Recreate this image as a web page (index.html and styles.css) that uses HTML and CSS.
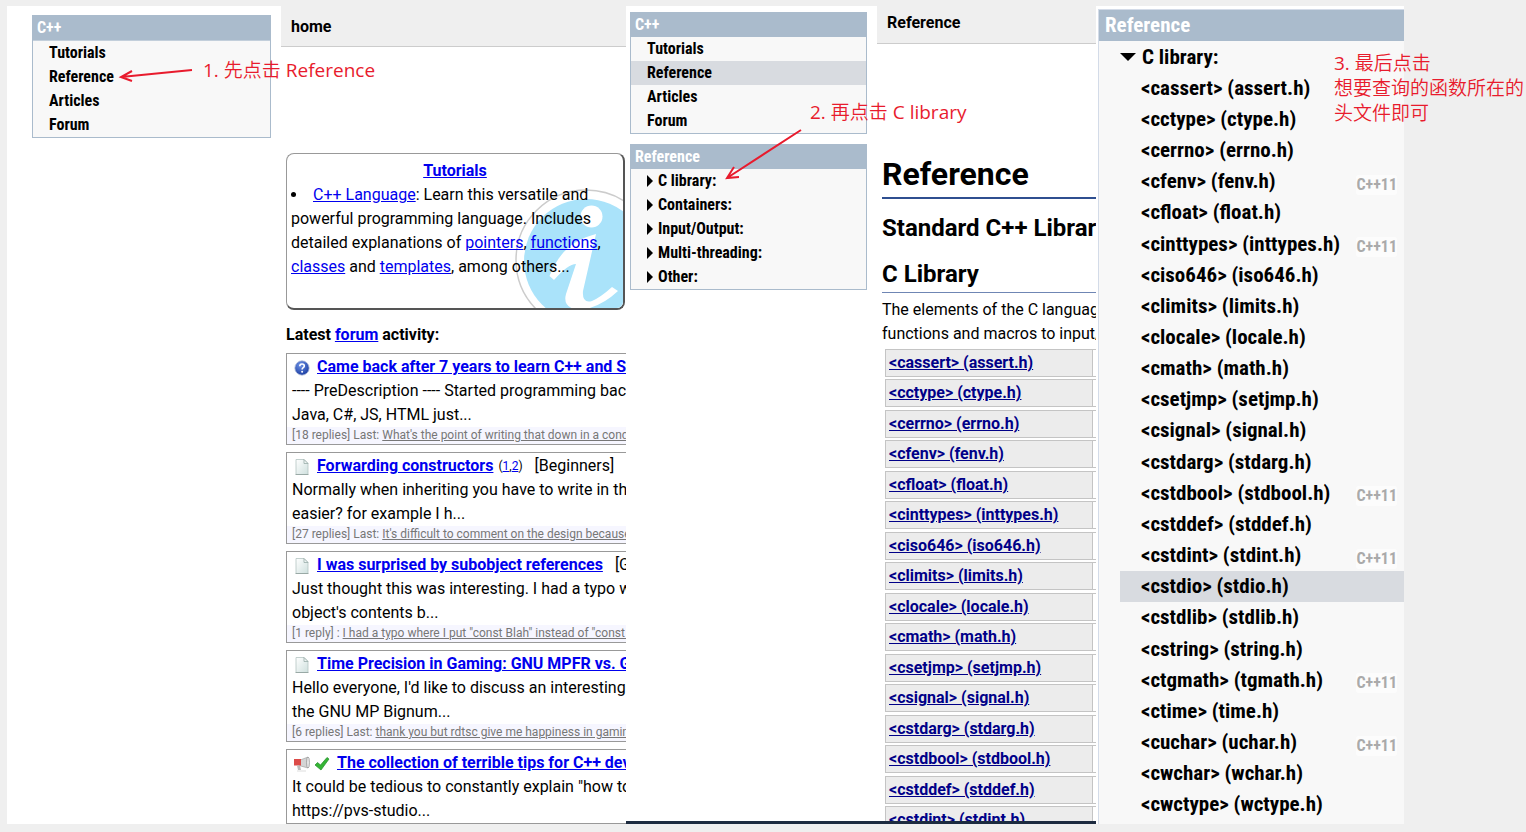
FILE: index.html
```html
<!DOCTYPE html>
<html lang="zh-CN">
<head>
<meta charset="utf-8">
<title>C++ Reference</title>
<link rel="stylesheet" href="styles.css">
</head>
<body>
<svg class="defs" aria-hidden="true">
  <defs>
    <linearGradient id="paper" x1="0" y1="0" x2="1" y2="1"><stop offset="0" stop-color="#fff"/><stop offset="1" stop-color="#cfe0de"/></linearGradient>
    <radialGradient id="ball" cx=".4" cy=".3" r=".7"><stop offset="0" stop-color="#6f93e6"/><stop offset="1" stop-color="#1c3fa4"/></radialGradient>
    <symbol id="doc" viewBox="0 0 16 16"><path d="M2 .5h8l4 4V15.500h-12z" fill="url(#paper)" stroke="#b4c4c1" stroke-width=".8"/><path d="M10 .5v4h4z" fill="#eef4f3" stroke="#8fa5a0" stroke-width=".7"/><path d="M1.500 15.600h13" stroke="#8a9a97" stroke-width=".8"/></symbol>
    <symbol id="question" viewBox="0 0 16 16"><circle cx="8" cy="8" r="7.200" fill="url(#ball)" stroke="#b6c2dc" stroke-width=".8"/><path d="M5.800 6.200c0-3 4.500-2.800 4.500-.2 0 1.700-2.200 1.700-2.200 3.500" fill="none" stroke="#fff" stroke-width="1.600"/><circle cx="8.100" cy="11.800" r="1" fill="#fff"/></symbol>
    <symbol id="horn" viewBox="0 0 16 16"><path d="M5 4.500l9-3.500v11L5 9.500z" fill="#d4d4d4" stroke="#999" stroke-width=".6"/><path d="M0 3h7v6.500H0z" fill="#dc4b48"/><path d="M3 9.500h3l1 4.500H4z" fill="#bbb"/><ellipse cx="14" cy="6.500" rx="1.400" ry="5.500" fill="#eee" stroke="#888" stroke-width=".7"/><path d="M3 15h9" stroke="#ddd"/></symbol>
    <symbol id="tick" viewBox="0 0 16 16"><path d="M1 9l2.500-2.500L6.500 9 13 1.500l2 1.500L7 14z" fill="#35b535" stroke="#218c2a" stroke-width=".7"/></symbol>
    <symbol id="right" viewBox="0 0 6 12"><path d="M0 0l6 6-6 6z"/></symbol>
    <symbol id="down" viewBox="0 0 16 8"><path d="M0 0h16L8 8z"/></symbol>
  </defs>
</svg>
<main class="board">
  <section class="shot shot-home">
    <aside class="side side-home">
      <nav class="menu">
        <h2 class="menu-title">C++</h2>
        <ul class="menu-list">
          <li><a href="#tutorials">Tutorials</a></li>
          <li><a href="#reference">Reference</a></li>
          <li><a href="#articles">Articles</a></li>
          <li><a href="#forum">Forum</a></li>
        </ul>
      </nav>
    </aside>
    <div class="content">
      <header class="bar bar-home">home</header>
      <div class="body body-home">
        <article class="card">
          <svg class="card-info" viewBox="516 188 108 120" aria-hidden="true">
            <circle cx="587" cy="260" r="70" fill="#fff" stroke="#ccc" stroke-width="1.500"/>
            <circle cx="587" cy="261" r="62" fill="#aae3fa"/>
            <circle cx="592.500" cy="216.500" r="11" fill="#fff"/>
            <path d="M550.500 276C560 252 574 240 597 234L584 291Q583 304 593 301Q602 297 613 287L619 291Q602 307 582 310Q563 309 567 294L577 264Q569 264 555 280Z" fill="#fff"/>
          </svg>
          <h3 class="card-title"><a href="#tutorials">Tutorials</a></h3>
          <p class="card-text"><span class="dot"></span><a href="#language">C++ Language</a>: Learn this versatile and<br>powerful programming language. Includes<br>detailed explanations of <a href="#pointers">pointers</a>, <a href="#functions">functions</a>,<br><a href="#classes">classes</a> and <a href="#templates">templates</a>, among others...</p>
        </article>
        <h3 class="latest">Latest <a href="#forum">forum</a> activity:</h3>
        <article class="post">
          <h4><svg class="icon"><use href="#question"/></svg><a href="#p1">Came back after 7 years to learn C++ and STL</a></h4>
          <p>---- PreDescription ---- Started programming back in<br>Java, C#, JS, HTML just...</p>
          <footer>[18 replies] Last: <a href="#r1">What's the point of writing that down in a condition</a></footer>
        </article>
        <article class="post">
          <h4><svg class="icon"><use href="#doc"/></svg><a href="#p2">Forwarding constructors</a><small>(<a href="#1">1</a>,<a href="#2">2</a>)</small><span class="tag">[Beginners]</span></h4>
          <p>Normally when inheriting you have to write in the<br>easier? for example I h...</p>
          <footer>[27 replies] Last: <a href="#r2">It's difficult to comment on the design because</a></footer>
        </article>
        <article class="post">
          <h4><svg class="icon"><use href="#doc"/></svg><a href="#p3">I was surprised by subobject references</a><span class="tag">[General]</span></h4>
          <p>Just thought this was interesting. I had a typo where<br>object's contents b...</p>
          <footer>[1 reply] : <a href="#r3">I had a typo where I put "const Blah" instead of "const Blah&amp;"</a></footer>
        </article>
        <article class="post">
          <h4><svg class="icon"><use href="#doc"/></svg><a href="#p4">Time Precision in Gaming: GNU MPFR vs. GMP</a></h4>
          <p>Hello everyone, I'd like to discuss an interesting topic<br>the GNU MP Bignum...</p>
          <footer>[6 replies] Last: <a href="#r4">thank you but rdtsc give me happiness in gaming</a></footer>
        </article>
        <article class="post">
          <h4><svg class="icon icon-lead"><use href="#horn"/></svg><svg class="icon"><use href="#tick"/></svg><a href="#p5">The collection of terrible tips for C++ developers</a></h4>
          <p>It could be tedious to constantly explain "how to<br>https://pvs-studio...</p>
        </article>
      </div>
    </div>
    <svg class="arrow arrow-one" viewBox="0 0 76 20" aria-hidden="true"><path d="M74 5L3 12M14 6L3 12L14 16"/></svg>
    <p class="note note-one"><span class="latin">1. </span>先点击<span class="latin"> Reference</span></p>
  </section>

  <section class="shot shot-ref">
    <aside class="side side-ref">
      <nav class="menu">
        <h2 class="menu-title">C++</h2>
        <ul class="menu-list">
          <li><a href="#tutorials">Tutorials</a></li>
          <li class="on"><a href="#reference">Reference</a></li>
          <li><a href="#articles">Articles</a></li>
          <li><a href="#forum">Forum</a></li>
        </ul>
      </nav>
      <nav class="menu">
        <h2 class="menu-title">Reference</h2>
        <ul class="menu-list">
          <li><button type="button"><svg class="tri"><use href="#right"/></svg>C library:</button></li>
          <li><button type="button"><svg class="tri"><use href="#right"/></svg>Containers:</button></li>
          <li><button type="button"><svg class="tri"><use href="#right"/></svg>Input/Output:</button></li>
          <li><button type="button"><svg class="tri"><use href="#right"/></svg>Multi-threading:</button></li>
          <li><button type="button"><svg class="tri"><use href="#right"/></svg>Other:</button></li>
        </ul>
      </nav>
    </aside>
    <div class="content">
      <header class="bar bar-ref">Reference</header>
      <div class="body body-ref">
        <h1>Reference</h1>
        <h2 class="sub">Standard C++ Library reference</h2>
        <h2 class="sub ruled">C Library</h2>
        <p class="intro">The elements of the C language library<br>functions and macros to input/output</p>
        <ul class="headers">
          <li><a href="#cassert">&lt;cassert&gt; (assert.h)</a></li>
          <li><a href="#cctype">&lt;cctype&gt; (ctype.h)</a></li>
          <li><a href="#cerrno">&lt;cerrno&gt; (errno.h)</a></li>
          <li><a href="#cfenv">&lt;cfenv&gt; (fenv.h)</a></li>
          <li><a href="#cfloat">&lt;cfloat&gt; (float.h)</a></li>
          <li><a href="#cinttypes">&lt;cinttypes&gt; (inttypes.h)</a></li>
          <li><a href="#ciso646">&lt;ciso646&gt; (iso646.h)</a></li>
          <li><a href="#climits">&lt;climits&gt; (limits.h)</a></li>
          <li><a href="#clocale">&lt;clocale&gt; (locale.h)</a></li>
          <li><a href="#cmath">&lt;cmath&gt; (math.h)</a></li>
          <li><a href="#csetjmp">&lt;csetjmp&gt; (setjmp.h)</a></li>
          <li><a href="#csignal">&lt;csignal&gt; (signal.h)</a></li>
          <li><a href="#cstdarg">&lt;cstdarg&gt; (stdarg.h)</a></li>
          <li><a href="#cstdbool">&lt;cstdbool&gt; (stdbool.h)</a></li>
          <li><a href="#cstddef">&lt;cstddef&gt; (stddef.h)</a></li>
          <li><a href="#cstdint">&lt;cstdint&gt; (stdint.h)</a></li>
        </ul>
      </div>
    </div>
    <svg class="arrow arrow-two" viewBox="0 0 84 56" aria-hidden="true"><path d="M78 3L4 51M11 40L4 51L16 50"/></svg>
    <p class="note note-two"><span class="latin">2. </span>再点击<span class="latin"> C library</span></p>
  </section>

  <section class="shot shot-list">
    <nav class="tree">
      <h2 class="tree-title">Reference</h2>
      <ul class="tree-list">
        <li class="root"><button type="button"><svg class="tri-down"><use href="#down"/></svg>C library:</button></li>
        <li><a href="#cassert">&lt;cassert&gt; (assert.h)</a></li>
        <li><a href="#cctype">&lt;cctype&gt; (ctype.h)</a></li>
        <li><a href="#cerrno">&lt;cerrno&gt; (errno.h)</a></li>
        <li><a href="#cfenv">&lt;cfenv&gt; (fenv.h)</a><span class="badge">C++11</span></li>
        <li><a href="#cfloat">&lt;cfloat&gt; (float.h)</a></li>
        <li><a href="#cinttypes">&lt;cinttypes&gt; (inttypes.h)</a><span class="badge">C++11</span></li>
        <li><a href="#ciso646">&lt;ciso646&gt; (iso646.h)</a></li>
        <li><a href="#climits">&lt;climits&gt; (limits.h)</a></li>
        <li><a href="#clocale">&lt;clocale&gt; (locale.h)</a></li>
        <li><a href="#cmath">&lt;cmath&gt; (math.h)</a></li>
        <li><a href="#csetjmp">&lt;csetjmp&gt; (setjmp.h)</a></li>
        <li><a href="#csignal">&lt;csignal&gt; (signal.h)</a></li>
        <li><a href="#cstdarg">&lt;cstdarg&gt; (stdarg.h)</a></li>
        <li><a href="#cstdbool">&lt;cstdbool&gt; (stdbool.h)</a><span class="badge">C++11</span></li>
        <li><a href="#cstddef">&lt;cstddef&gt; (stddef.h)</a></li>
        <li><a href="#cstdint">&lt;cstdint&gt; (stdint.h)</a><span class="badge">C++11</span></li>
        <li class="on"><a href="#cstdio">&lt;cstdio&gt; (stdio.h)</a></li>
        <li><a href="#cstdlib">&lt;cstdlib&gt; (stdlib.h)</a></li>
        <li><a href="#cstring">&lt;cstring&gt; (string.h)</a></li>
        <li><a href="#ctgmath">&lt;ctgmath&gt; (tgmath.h)</a><span class="badge">C++11</span></li>
        <li><a href="#ctime">&lt;ctime&gt; (time.h)</a></li>
        <li><a href="#cuchar">&lt;cuchar&gt; (uchar.h)</a><span class="badge">C++11</span></li>
        <li><a href="#cwchar">&lt;cwchar&gt; (wchar.h)</a></li>
        <li><a href="#cwctype">&lt;cwctype&gt; (wctype.h)</a></li>
      </ul>
    </nav>
  </section>
  <p class="note note-three"><span class="latin">3. </span>最后点击<br>想要查询的函数所在的<br>头文件即可</p>
</main>
</body>
</html>
```
FILE: styles.css
```css
* { box-sizing: border-box; }
body { margin: 0; background: #efefef; color: #000; font: 16px/24px Roboto, "Noto Sans", sans-serif; }
h1, h2, h3, h4, p, ul { margin: 0; padding: 0; }
ul { list-style: none; }
a { color: #00e; }
button { padding: 0; border: 0; background: none; color: inherit; font: inherit; cursor: pointer; }
.defs { position: absolute; width: 0; height: 0; }

.board {
  position: relative;
  display: grid;
  grid-template-columns: 619fr 470fr 308fr 122fr;
  min-height: 100vh;
  padding: 6px 0 8px 7px;
}
.shot { position: relative; display: flex; min-width: 0; background: #fff; }
.shot-home, .shot-ref { contain: size; overflow: hidden; }
.shot-ref { border-bottom: 3px solid #1d2b40; }

/* Side menus */
.side { display: flex; flex: none; flex-direction: column; gap: 10px; }
.side-home { width: 274px; padding: 9px 10px 0 25px; }
.side-ref { width: 251px; padding: 6px 10px 0 4px; }
.menu { border: 1px solid #abc; background: #f8f8f8; font-family: "Roboto Condensed", Roboto, sans-serif; font-weight: 700; }
.menu-title { padding-left: 4px; background: #abc; color: #fff; font-size: 16px; line-height: 24px; }
.side-home .menu-title { border-bottom: 1px solid #c3cfdb; }
.menu-list li { padding-left: 16px; }
.menu-list .on { background: #d8dbe0; }
.menu a, .tree a { color: #000; text-decoration: none; }
.menu button, .tree button { display: flex; align-items: center; }
.tri { width: 6px; height: 12px; margin-right: 5px; }

/* Page content */
.content { flex: 1; min-width: 0; overflow: hidden; white-space: nowrap; }
.bar { padding-left: 10px; border-bottom: 1px solid #ccc; background: #efefef; font-weight: 700; }
.bar-home { padding-top: 2px; line-height: 38px; }
.bar-ref { padding-bottom: 4px; line-height: 33px; }
.body { padding-left: 5px; }
.body-home { padding-top: 106px; }
.body-ref { padding-top: 110px; }

.card {
  position: relative;
  overflow: hidden;
  height: 157px;
  margin-right: 1px;
  padding: 5px 4px 4px;
  border: 1px solid #999;
  border-right: 2px solid #555;
  border-bottom: 2px solid #555;
  border-radius: 8px;
}
.card-info { position: absolute; right: 0; bottom: 0; width: 108px; height: 120px; }
.card-title { position: relative; font-size: 16px; text-align: center; }
.card-text { position: relative; }
.dot { display: inline-block; width: 5px; height: 5px; margin-right: 17px; border-radius: 50%; background: #000; vertical-align: 3px; }
.latest { margin: 13px 0 6px; font-size: 16px; }
.post { margin-bottom: 7px; border: 1px solid #999; border-right: 0; }
.post h4, .post p { padding-left: 5px; font-size: 16px; }
.post h4 { display: flex; align-items: center; padding-top: 1px; }
.post small { margin-left: 5px; font-size: 12px; font-weight: 400; }
.post footer { padding-left: 5px; background: #f6f6ff; color: #777; font-size: 12px; line-height: 17px; }
.post footer a { color: #777; }
.icon { flex: none; width: 16px; height: 16px; margin: 1px 7px 0 2px; }
.icon-lead { margin-right: 2px; }
.tag { margin-left: 12px; font-weight: 400; }

.body h1 { padding-bottom: 3px; border-bottom: 2px solid #2f4f90; font-size: 32px; line-height: 40px; }
.sub { margin-top: 13px; font-size: 24px; line-height: 32px; }
.ruled { margin-top: 14px; padding-bottom: 2px; border-bottom: 1px solid #6f86b4; }
.intro { padding-top: 5px; }
.headers { margin: 3px 0 0 3px; }
.headers li { display: flex; height: 28px; margin-bottom: 2px; border: 1px solid #c4c4c4; border-right: 0; }
.headers li:nth-child(even) { margin-bottom: 3px; }
.headers a { flex: 1; margin-right: 3px; padding-left: 3px; border-right: 1px solid #c4c4c4; background: #ececec; color: #008; font-weight: 700; line-height: 26px; }

/* Expanded header tree */
.shot-list { padding: 3px 0 0 2px; }
.tree { display: flex; flex: 1; flex-direction: column; min-width: 0; border: 1px solid #d3dbe8; border-width: 1px 0 0 1px; background: #f8f8f8; font: 700 21px/24px "Roboto Condensed", Roboto, sans-serif; }
.tree-title { padding-left: 6px; background: #abc; color: #fff; font-size: 21px; line-height: 31px; }
.tree-list { display: flex; flex: 1; flex-direction: column; padding: 0 0 4px 21px; }
.tree-list li { display: flex; flex: 1; align-items: center; justify-content: space-between; padding: 0 7px 0 21px; }
.tree-list .root { padding-left: 0; }
.tree-list .on { background: #d8dbe0; }
.tri-down { width: 16px; height: 8px; margin-right: 6px; }
.badge { margin-top: 7px; border-radius: 3px; background: #fcfcfc; color: #aaa; font-size: 16px; line-height: 20px; }

/* Red annotations */
.note { position: absolute; color: #e81b2d; font: 350 19px/25px "Open Sans", "Noto Sans CJK SC", sans-serif; white-space: nowrap; }
.latin { font-weight: 400; }
.note-one { top: 52px; left: 196px; }
.note-two { top: 94px; left: 184px; }
.note-three { top: 51px; right: 2px; }
.arrow { position: absolute; fill: none; stroke: #e81b2d; stroke-width: 2; }
.arrow-one { top: 59px; left: 111px; width: 76px; height: 20px; }
.arrow-two { top: 121px; left: 97px; width: 84px; height: 56px; }
```
